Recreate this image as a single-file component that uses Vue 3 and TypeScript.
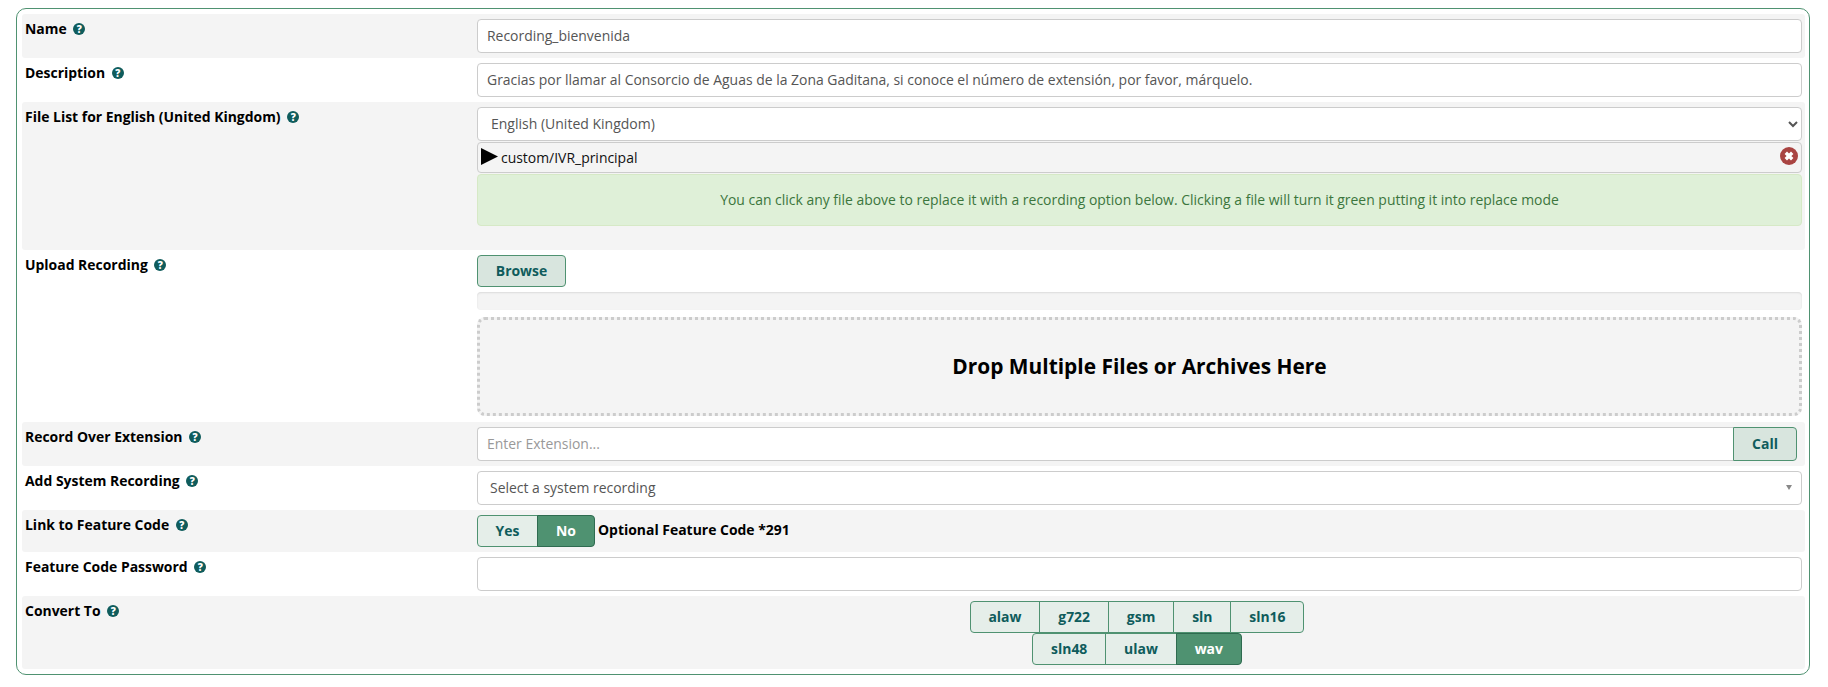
<script setup lang="ts">
const firstCodecs = ['alaw', 'g722', 'gsm', 'sln', 'sln16']
const secondCodecs = ['sln48', 'ulaw', 'wav']
</script>

<template>
  <div class="page">
    <div class="panel">
      <div class="row alt r1">
        <div class="label">Name <span class="help">?</span></div>
        <div class="field"><input class="input" value="Recording_bienvenida" /></div>
      </div>
      <div class="row r1">
        <div class="label">Description <span class="help">?</span></div>
        <div class="field"><input class="input" value="Gracias por llamar al Consorcio de Aguas de la Zona Gaditana, si conoce el número de extensión, por favor, márquelo." /></div>
      </div>
      <div class="row alt r3">
        <div class="label">File List for English (United Kingdom) <span class="help">?</span></div>
        <div class="field">
          <select class="input select"><option>English (United Kingdom)</option></select>
          <div class="file">
            <svg class="play" viewBox="0 0 17 17"><path d="M0 0L17 8.5L0 17Z" /></svg>
            <span class="fname">custom/IVR_principal</span>
            <svg class="del" viewBox="0 0 18 18"><circle cx="9" cy="9" r="9" fill="#a94442" /><path d="M5.8 5.8L12.2 12.2M12.2 5.8L5.8 12.2" stroke="#fff" stroke-width="3.4" /></svg>
          </div>
          <div class="alert">You can click any file above to replace it with a recording option below. Clicking a file will turn it green putting it into replace mode</div>
        </div>
      </div>
      <div class="row r4">
        <div class="label">Upload Recording <span class="help">?</span></div>
        <div class="field">
          <button class="btn browse">Browse</button>
          <div class="progress"></div>
          <div class="drop">Drop Multiple Files or Archives Here</div>
        </div>
      </div>
      <div class="row alt r1">
        <div class="label">Record Over Extension <span class="help">?</span></div>
        <div class="field group">
          <input class="input ext" placeholder="Enter Extension..." />
          <button class="btn call">Call</button>
        </div>
      </div>
      <div class="row r1">
        <div class="label">Add System Recording <span class="help">?</span></div>
        <div class="field">
          <div class="input fake">Select a system recording<span class="caret"></span></div>
        </div>
      </div>
      <div class="row alt r7">
        <div class="label">Link to Feature Code <span class="help">?</span></div>
        <div class="field toggle-line">
          <div class="seg"><span class="opt yes">Yes</span><span class="opt on no">No</span></div>
          <b class="opt-label">Optional Feature Code *291</b>
        </div>
      </div>
      <div class="row r1">
        <div class="label">Feature Code Password <span class="help">?</span></div>
        <div class="field"><input class="input" /></div>
      </div>
      <div class="row alt r9">
        <div class="label">Convert To <span class="help">?</span></div>
        <div class="field codecs">
          <div class="seg">
            <span v-for="c in firstCodecs" :key="c" class="opt codec">{{ c }}</span>
          </div>
          <div class="seg">
            <span v-for="c in secondCodecs" :key="c" class="opt codec" :class="{ on: c === 'wav' }">{{ c }}</span>
          </div>
        </div>
      </div>
    </div>
  </div>
</template>

<style>
body { margin: 0; background: #fff; }
</style>

<style scoped>
.page {
  padding: 8px 18px 11px 16px;
  font-family: "Open Sans", sans-serif;
  font-size: 13.95px;
  color: #000;
}
.panel {
  border: 1px solid #4f9271;
  border-radius: 10px;
  padding: 5px 4px 5px 5px;
}
.row {
  display: grid;
  grid-template-columns: 452px 1fr;
  border-radius: 3px;
  padding: 5px 3px 5px 3px;
  box-sizing: border-box;
}
.alt { background: #f4f4f4; }
.r1 { height: 44px; }
.r3 { height: 148px; }
.r4 { height: 172px; }
.r7 { height: 42px; }
.r9 { height: 73px; }
.label { font-weight: 700; line-height: 20px; white-space: nowrap; }
.help {
  display: inline-flex;
  align-items: center;
  justify-content: center;
  width: 12px;
  height: 12px;
  border-radius: 50%;
  background: #0f5c5c;
  color: #fff;
  font-size: 10px;
  line-height: 1;
  font-weight: 800;
  margin-left: 3px;
  vertical-align: 1px;
}
.field { min-width: 0; }
.input {
  display: block;
  width: 100%;
  height: 34px;
  box-sizing: border-box;
  border: 1px solid #ccc;
  border-radius: 4px;
  background: #fff;
  padding: 5px 12px 7px 9px;
  font: 13.95px "Open Sans", sans-serif;
  color: #555;
}
.input::placeholder { color: #999; }
.select { padding-left: 9px; font-size: 14px; }
.file {
  display: flex;
  align-items: center;
  height: 31px;
  box-sizing: border-box;
  border: 1px solid #ccc;
  border-radius: 4px;
  margin-top: 1px;
  background: #f4f4f4;
}
.play { width: 17px; height: 17px; margin: -3px 3px 0 3px; flex: none; }
.fname { flex: 1; color: #111; }
.del { width: 18px; height: 18px; margin: -3px 3px 0 0; flex: none; }
.alert {
  height: 52px;
  box-sizing: border-box;
  margin-top: 1px;
  padding-bottom: 2px;
  background: #dff0d8;
  border: 1px solid #d6e9c6;
  border-radius: 4px;
  color: #3c763d;
  display: flex;
  align-items: center;
  justify-content: center;
}
.btn {
  font: 700 13.95px "Open Sans", sans-serif;
  color: #0f5c5c;
  background: #d8e5de;
  border: 1px solid #4f9271;
  border-radius: 4px;
  cursor: pointer;
}
.browse { display: block; width: 89px; height: 32px; padding: 0 0 2px; }
.progress {
  height: 18px;
  margin-top: 5px;
  background: #f4f4f4;
  border-radius: 4px;
  box-shadow: inset 0 1px 2px rgba(0, 0, 0, 0.1);
}
.drop {
  height: 99px;
  margin-top: 7px;
  padding-bottom: 2px;
  box-sizing: border-box;
  border: 3px dotted #ccc;
  border-radius: 8px;
  background: #f4f4f4;
  display: flex;
  align-items: center;
  justify-content: center;
  font-size: 20.9px;
  font-weight: 700;
}
.group { display: flex; padding-right: 5px; }
.ext { flex: 1; min-width: 0; border-right: 0; border-radius: 4px 0 0 4px; }
.call { width: 64px; height: 34px; padding: 0 0 2px; border-radius: 0 4px 4px 0; }
.fake { position: relative; padding: 6px 12px 6px 12px; line-height: 20px; }
.caret {
  position: absolute;
  right: 9px;
  top: 13px;
  border: 3.5px solid transparent;
  border-top: 5px solid #888;
  border-bottom: 0;
}
.toggle-line { display: flex; align-items: center; gap: 3px; height: 32px; }
.opt-label { margin-top: -4px; }
.seg { display: inline-flex; }
.opt {
  display: flex;
  align-items: center;
  justify-content: center;
  height: 32px;
  box-sizing: border-box;
  border: 1px solid #4f9271;
  margin-left: -1px;
  padding-bottom: 2px;
  background: #e5eee9;
  color: #0f5c5c;
  font-weight: 700;
}
.opt:first-child { margin-left: 0; border-radius: 4px 0 0 4px; }
.opt:last-child { border-radius: 0 4px 4px 0; }
.yes { width: 61px; }
.no { width: 58px; }
.on { background: #4f9271; color: #fff; border-color: #2f6b50; }
.codecs { display: flex; flex-direction: column; align-items: center; padding-right: 5px; }
.codec { padding: 0 17.9px 2px; }
</style>
